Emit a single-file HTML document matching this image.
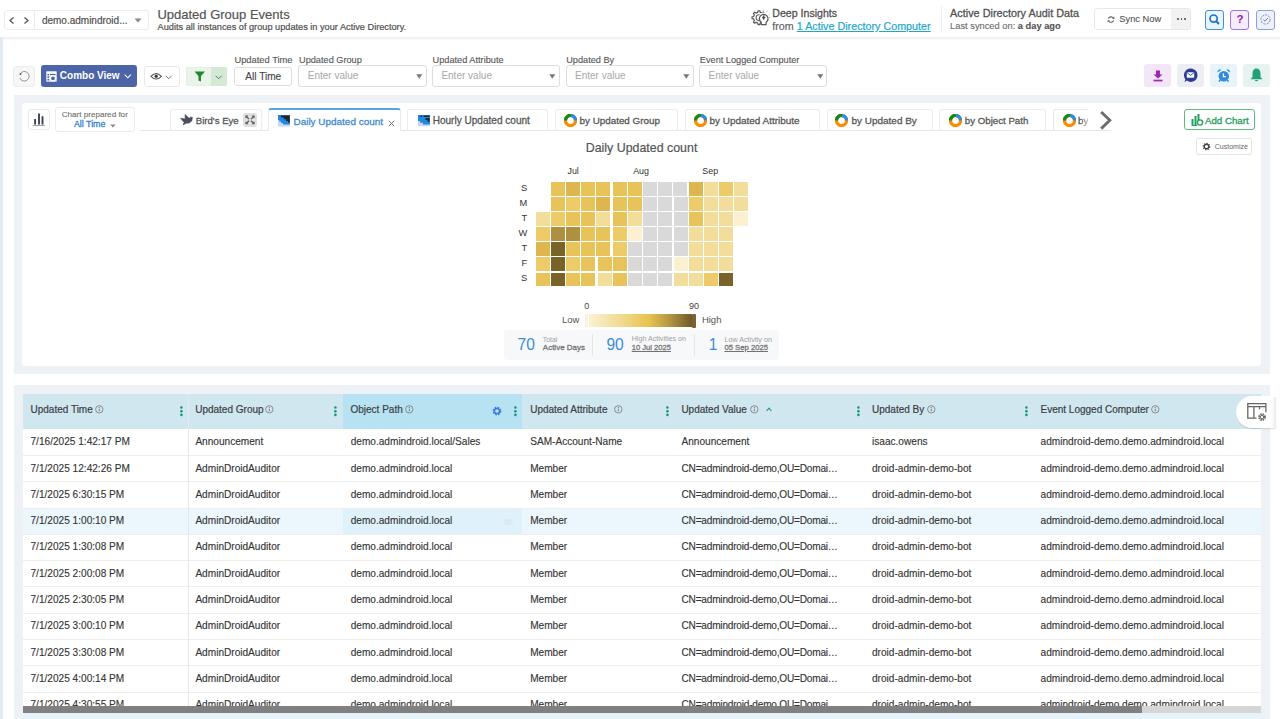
<!DOCTYPE html><html><head><meta charset="utf-8"><style>
html,body{margin:0;padding:0;}
body{width:1280px;height:719px;overflow:hidden;position:relative;background:#fff;font-family:"Liberation Sans",sans-serif;}
.t{position:absolute;line-height:1;white-space:nowrap;}
.r{position:absolute;box-sizing:border-box;}
.sb{-webkit-text-stroke-width:0.27px}
.sm{-webkit-text-stroke-width:0.2px}
.sl{-webkit-text-stroke-width:0.12px}
</style></head><body>
<div class="r" style="left:0.00px;top:36.80px;width:1280.00px;height:3.20px;background:linear-gradient(#EDEDED,#F3F3F3 40%,#FDFDFD)"></div>
<div class="r" style="left:0.00px;top:37.00px;width:3.00px;height:682.00px;background:#E3EAF1"></div>
<div class="r" style="left:3.50px;top:10.25px;width:145.25px;height:19.50px;border:1px solid #EBEBEB;border-radius:3px;background:#fff"></div>
<div class="r" style="left:34.40px;top:10.50px;width:1.00px;height:19.00px;background:#ECECEC"></div>
<svg class="r" style="left:8.00px;top:16.00px;" width="8" height="9" viewBox="0 0 8 9"><path d="M5.5 1.5 L2 4.5 L5.5 7.5" fill="none" stroke="#555" stroke-width="1.3"/></svg>
<svg class="r" style="left:22.00px;top:16.00px;" width="8" height="9" viewBox="0 0 8 9"><path d="M2.5 1.5 L6 4.5 L2.5 7.5" fill="none" stroke="#555" stroke-width="1.3"/></svg>
<div class="t sm" style="left:41.90px;top:15.93px;font-size:10px;color:#505050;font-weight:400;">demo.admindroid...</div>
<svg class="r" style="left:134.00px;top:18.00px;" width="8" height="5" viewBox="0 0 8 5"><path d="M0.5 0.5 L7.5 0.5 L4 4.5 Z" fill="#888"/></svg>
<div class="t sm" style="left:157.40px;top:8.20px;font-size:13px;color:#555;font-weight:400;">Updated Group Events</div>
<div class="t sm" style="left:157.60px;top:23.11px;font-size:9.2px;color:#505050;font-weight:400;">Audits all instances of group updates in your Active Directory.</div>
<svg class="r" style="left:748.00px;top:6.00px;" width="26" height="24" viewBox="0 0 26 24"><path d="M16.37 10.50 L17.94 10.79 L17.94 12.61 L16.37 12.90 L15.64 14.65 L16.55 15.97 L15.27 17.25 L13.95 16.34 L12.20 17.07 L11.91 18.64 L10.09 18.64 L9.80 17.07 L8.05 16.34 L6.73 17.25 L5.45 15.97 L6.36 14.65 L5.63 12.90 L4.06 12.61 L4.06 10.79 L5.63 10.50 L6.36 8.75 L5.45 7.43 L6.73 6.15 L8.05 7.06 L9.80 6.33 L10.09 4.76 L11.91 4.76 L12.20 6.33 L13.95 7.06 L15.27 6.15 L16.55 7.43 L15.64 8.75 Z" fill="#fff" stroke="#555" stroke-width="1.2" stroke-linejoin="round"/>
      <circle cx="11" cy="11.7" r="2.9" fill="none" stroke="#666" stroke-width="1.1"/>
      <circle cx="15.7" cy="11.4" r="4.9" fill="#fff"/>
      <path d="M13.3 16.2 A4.3 4.3 0 1 1 18.1 16.2 V18.6 H13.3 Z" fill="#fff" stroke="#555" stroke-width="1.2" stroke-linejoin="round"/>
      <path d="M16.2 9.2 L14.8 11.6 L16.6 11.4 L15.3 13.6" fill="none" stroke="#444" stroke-width="1.1"/>
      <path d="M15.6 4.2 V5.4 M19.2 5 L18.6 6 M21.6 8 L20.6 8.6 M22.2 11.4 H21 M21.5 14.6 L20.6 14" stroke="#999" stroke-width="0.8"/></svg>
<div class="t sb" style="left:772.30px;top:8.23px;font-size:10.6px;color:#505050;font-weight:400;">Deep Insights</div>
<div class="t sm" style="left:772.30px;top:20.90px;font-size:10.75px;color:#666;font-weight:400;">from <span style="color:#1DA7D0;text-decoration:underline">1 Active Directory Computer</span></div>
<div class="r" style="left:940.50px;top:6.00px;width:1.00px;height:27.00px;background:#F0F0F0"></div>
<div class="t sb" style="left:950.10px;top:8.32px;font-size:10.85px;color:#505050;font-weight:400;">Active Directory Audit Data</div>
<div class="t sl" style="left:950.10px;top:22.23px;font-size:9.3px;color:#6a6a6a;font-weight:400;">Last synced on: <b style="color:#555">a day ago</b></div>
<div class="r" style="left:1094.00px;top:8.00px;width:97.00px;height:21.80px;border:1px solid #E8E8E8;border-radius:3px;background:#fff"></div>
<div class="r" style="left:1171.00px;top:9.00px;width:19.00px;height:19.80px;background:#F2F2F2"></div>
<svg class="r" style="left:1107.00px;top:14.50px;" width="8" height="9" viewBox="0 0 8 9"><path d="M1.3 3.6 A3.1 3.1 0 0 1 6.6 3.2" fill="none" stroke="#666" stroke-width="1.1"/><path d="M6.7 5.6 A3.1 3.1 0 0 1 1.4 6" fill="none" stroke="#666" stroke-width="1.1"/><path d="M7.4 1.6 V3.9 H5.1 Z M0.6 7.6 V5.3 H2.9 Z" fill="#666"/></svg>
<div class="t sl" style="left:1119.30px;top:14.73px;font-size:9.3px;color:#555;font-weight:400;">Sync Now</div>
<div class="r" style="left:1177.30px;top:17.80px;width:1.80px;height:1.80px;background:#444;border-radius:1px"></div>
<div class="r" style="left:1180.60px;top:17.80px;width:1.80px;height:1.80px;background:#444;border-radius:1px"></div>
<div class="r" style="left:1183.90px;top:17.80px;width:1.80px;height:1.80px;background:#444;border-radius:1px"></div>
<div class="r" style="left:1205.00px;top:10.00px;width:18.80px;height:19.60px;border:1px solid #3D93DE;border-radius:3px;background:#EAF4FC"></div>
<svg class="r" style="left:1208.00px;top:13.00px;" width="13" height="13" viewBox="0 0 13 13"><circle cx="5.6" cy="5.6" r="3.6" fill="none" stroke="#1E74C9" stroke-width="1.7"/><path d="M8.2 8.2 L11 11" stroke="#1E74C9" stroke-width="2"/></svg>
<div class="r" style="left:1230.00px;top:10.00px;width:19.40px;height:19.60px;border:1px solid #A872E0;border-radius:3px;background:#F4ECFC"></div>
<div class="t " style="left:1236.50px;top:14.27px;font-size:11.5px;color:#8E24AA;font-weight:700;">?</div>
<div class="r" style="left:1255.50px;top:10.00px;width:19.20px;height:19.60px;border:1px solid #8C9FDA;border-radius:3px;background:#EEF1FA"></div>
<svg class="r" style="left:1258.50px;top:13.00px;" width="13" height="13" viewBox="0 0 13 13"><circle cx="6.5" cy="6.5" r="4.6" fill="none" stroke="#7F8FD0" stroke-width="1" stroke-dasharray="2.4 1"/><path d="M4.3 6.6 L6 8.2 L8.9 5" fill="none" stroke="#6C7CC4" stroke-width="1"/></svg>
<div class="r" style="left:13.25px;top:65.60px;width:21.65px;height:21.80px;border:1px solid #ECECEC;border-radius:3px;background:#F7F7F7"></div>
<svg class="r" style="left:18.00px;top:70.00px;" width="13" height="13" viewBox="0 0 13 13"><path d="M2.1 3.97 A4.8 4.8 0 1 1 1.82 8.02" fill="none" stroke="#888" stroke-width="0.9"/><circle cx="2.5" cy="4.1" r="1" fill="#555"/></svg>
<div class="r" style="left:41.00px;top:64.90px;width:96.20px;height:22.00px;background:#4B65A8;border-radius:3px"></div>
<svg class="r" style="left:45.50px;top:70.50px;" width="11" height="11" viewBox="0 0 11 11"><rect x="0.9" y="0.9" width="9.2" height="9.2" fill="none" stroke="#fff" stroke-width="1.1"/><rect x="0.9" y="0.9" width="9.2" height="2" fill="#fff"/><path d="M0.9 4.8 H4 M0.9 7.4 H4 M3.6 2.8 V10 M4 4.8 H10" stroke="#fff" stroke-width="0.9"/><circle cx="7" cy="7.3" r="2.6" fill="#4B65A8" stroke="#fff" stroke-width="1.4"/></svg>
<div class="t " style="left:59.80px;top:71.13px;font-size:10px;color:#fff;font-weight:700;">Combo View</div>
<svg class="r" style="left:124.00px;top:73.50px;" width="8" height="5" viewBox="0 0 8 5"><path d="M0.7 0.7 L3.8 3.8 L6.9 0.7" fill="none" stroke="#fff" stroke-width="1.1"/></svg>
<div class="r" style="left:143.70px;top:66.30px;width:36.40px;height:20.30px;border:1px solid #E8E8E8;border-radius:3px;background:#fff"></div>
<svg class="r" style="left:150.00px;top:72.00px;" width="13" height="9" viewBox="0 0 13 9"><path d="M1 4.3 Q6.2 -1.2 11.4 4.3 Q6.2 9.8 1 4.3 Z" fill="none" stroke="#555" stroke-width="1.1"/><circle cx="6.2" cy="4.3" r="1.7" fill="#3b4050"/></svg>
<svg class="r" style="left:165.00px;top:74.50px;" width="8" height="5" viewBox="0 0 8 5"><path d="M0.7 0.7 L3.7 3.8 L6.7 0.7" fill="none" stroke="#777" stroke-width="1"/></svg>
<div class="r" style="left:186.20px;top:67.20px;width:24.90px;height:18.90px;background:#EAF4EA;border:1px dotted #DDEBDD;border-right:none"></div>
<div class="r" style="left:211.10px;top:67.20px;width:16.10px;height:18.90px;background:#D4EAD4;border-radius:0 2px 2px 0"></div>
<svg class="r" style="left:193.50px;top:71.00px;" width="12" height="11" viewBox="0 0 12 11"><path d="M0.5 0.5 H11 L7 5 V10.5 L4.5 9.5 V5 Z" fill="#1B8A2B"/></svg>
<svg class="r" style="left:214.80px;top:74.50px;" width="8" height="5" viewBox="0 0 8 5"><path d="M0.7 0.7 L3.7 3.8 L6.7 0.7" fill="none" stroke="#6b7a6b" stroke-width="1"/></svg>
<div class="t sl" style="left:234.40px;top:56.49px;font-size:9.35px;color:#555;font-weight:400;">Updated Time</div>
<div class="r" style="left:234.40px;top:67.20px;width:57.80px;height:19.10px;border:1px solid #DEDEDE;border-radius:3px;background:#fff"></div>
<div class="t sl" style="left:245.30px;top:72.15px;font-size:10.1px;color:#444;font-weight:400;">All Time</div>
<div class="t sl" style="left:299.00px;top:55.71px;font-size:9.2px;color:#555;font-weight:400;">Updated Group</div>
<div class="r" style="left:298.30px;top:65.30px;width:128.30px;height:21.90px;border:1px solid #DDDDDD;border-radius:3px;background:#fff"></div>
<div class="t " style="left:307.80px;top:71.33px;font-size:10.0px;color:#A8A8A8;font-weight:400;">Enter value</div>
<svg class="r" style="left:415.80px;top:74.00px;" width="7" height="5" viewBox="0 0 7 5"><path d="M0.3 0.3 H6.3 L3.3 4.8 Z" fill="#777"/></svg>
<div class="t sl" style="left:432.60px;top:55.71px;font-size:9.2px;color:#555;font-weight:400;">Updated Attribute</div>
<div class="r" style="left:431.90px;top:65.30px;width:128.30px;height:21.90px;border:1px solid #DDDDDD;border-radius:3px;background:#fff"></div>
<div class="t " style="left:441.40px;top:71.33px;font-size:10.0px;color:#A8A8A8;font-weight:400;">Enter value</div>
<svg class="r" style="left:549.40px;top:74.00px;" width="7" height="5" viewBox="0 0 7 5"><path d="M0.3 0.3 H6.3 L3.3 4.8 Z" fill="#777"/></svg>
<div class="t sl" style="left:566.20px;top:55.71px;font-size:9.2px;color:#555;font-weight:400;">Updated By</div>
<div class="r" style="left:565.50px;top:65.30px;width:128.30px;height:21.90px;border:1px solid #DDDDDD;border-radius:3px;background:#fff"></div>
<div class="t " style="left:575.00px;top:71.33px;font-size:10.0px;color:#A8A8A8;font-weight:400;">Enter value</div>
<svg class="r" style="left:683.00px;top:74.00px;" width="7" height="5" viewBox="0 0 7 5"><path d="M0.3 0.3 H6.3 L3.3 4.8 Z" fill="#777"/></svg>
<div class="t sl" style="left:699.80px;top:55.71px;font-size:9.2px;color:#555;font-weight:400;">Event Logged Computer</div>
<div class="r" style="left:699.10px;top:65.30px;width:128.30px;height:21.90px;border:1px solid #DDDDDD;border-radius:3px;background:#fff"></div>
<div class="t " style="left:708.60px;top:71.33px;font-size:10.0px;color:#A8A8A8;font-weight:400;">Enter value</div>
<svg class="r" style="left:816.60px;top:74.00px;" width="7" height="5" viewBox="0 0 7 5"><path d="M0.3 0.3 H6.3 L3.3 4.8 Z" fill="#777"/></svg>
<div class="r" style="left:1144.20px;top:64.20px;width:26.60px;height:22.40px;background:#F4E6F9;border-radius:3px"></div>
<svg class="r" style="left:1152.50px;top:69.50px;" width="10" height="12" viewBox="0 0 10 12"><path d="M3 0.5 H7 V4.5 H9.5 L5 8.5 L0.5 4.5 H3 Z" fill="#9C27B0"/><rect x="0.5" y="9.7" width="9" height="1.7" fill="#9C27B0"/></svg>
<div class="r" style="left:1176.90px;top:64.20px;width:26.90px;height:22.40px;background:#ECEEF4;border-radius:3px"></div>
<svg class="r" style="left:1183.00px;top:67.50px;" width="15" height="15" viewBox="0 0 15 15"><path d="M7.5 0.5 A6.7 6.7 0 1 1 3.8 12.6 L1.6 14.3 L2.3 11.2 A6.7 6.7 0 0 1 7.5 0.5 Z" fill="#2B3C94"/><rect x="3.8" y="4.3" width="7.4" height="5.4" fill="#fff" rx="0.6"/><path d="M4 4.6 L7.5 7.4 L11 4.6" fill="none" stroke="#2B3C94" stroke-width="0.9"/></svg>
<div class="r" style="left:1210.10px;top:64.20px;width:26.70px;height:22.40px;background:#E8F3FA;border-radius:3px"></div>
<svg class="r" style="left:1216.50px;top:68.50px;" width="14" height="13" viewBox="0 0 14 13"><path d="M0.6 3.6 A2.6 2.6 0 0 1 4.4 0.7 Z M13 3.6 A2.6 2.6 0 0 0 9.2 0.7 Z" fill="#2E8BE0"/><circle cx="6.8" cy="7.2" r="5.2" fill="#2E8BE0"/><path d="M3.3 11 L2.1 12.7 M10.3 11 L11.5 12.7" stroke="#2E8BE0" stroke-width="1.5"/><path d="M6.4 4.4 V7.7 H8.9" fill="none" stroke="#fff" stroke-width="1.3"/></svg>
<div class="r" style="left:1243.20px;top:64.20px;width:26.80px;height:22.40px;background:#E6F3F1;border-radius:3px"></div>
<svg class="r" style="left:1250.00px;top:68.30px;" width="13" height="14" viewBox="0 0 13 14"><path d="M6.5 0.5 C9.5 0.5 10.5 3 10.5 6 V9 L12.5 11.2 H0.5 L2.5 9 V6 C2.5 3 3.5 0.5 6.5 0.5 Z" fill="#23A07B"/><path d="M4.8 12 A1.8 1.8 0 0 0 8.2 12 Z" fill="#23A07B"/></svg>
<div class="r" style="left:13.90px;top:94.70px;width:1255.90px;height:279.00px;background:#EEF2F6"></div>
<div class="r" style="left:22.00px;top:103.00px;width:1239.00px;height:262.70px;background:#fff;border-radius:4px"></div>
<div class="r" style="left:28.10px;top:109.00px;width:22.30px;height:21.40px;border:1px solid #E9E9E9;border-radius:3px;background:#fff"></div>
<svg class="r" style="left:32.00px;top:112.00px;" width="14" height="15" viewBox="0 0 14 15"><path d="M3.1 7 V12.4 M7 1.5 V12.4 M10.5 4.2 V12.4" stroke="#3b4156" stroke-width="1.9"/><path d="M1 13.4 H12.8" stroke="#8a8a8a" stroke-width="0.9"/></svg>
<div class="r" style="left:55.00px;top:106.70px;width:79.80px;height:25.40px;border:1px solid #EBEBEB;border-radius:3px;background:#fff"></div>
<div class="t sl" style="left:61.70px;top:110.64px;font-size:8.1px;color:#707070;font-weight:400;">Chart prepared for</div>
<div class="t sb" style="left:73.90px;top:119.87px;font-size:8.9px;color:#2F80D0;font-weight:400;">All Time</div>
<svg class="r" style="left:110.00px;top:123.50px;" width="6" height="4" viewBox="0 0 6 4"><path d="M0.2 0.4 H5.6 L2.9 3.4 Z" fill="#888"/></svg>
<div class="r" style="left:140.00px;top:130.30px;width:971.00px;height:1.00px;background:#E8E8E8"></div>
<div class="r" style="left:170.40px;top:108.50px;width:91.50px;height:22.30px;background:#fff;border:1px solid #EDEDED;border-bottom:1px solid #E6E6E6;border-radius:3px 3px 0 0"></div>
<svg class="r" style="left:174.00px;top:110.00px;" width="24" height="20" viewBox="0 0 24 20"><path d="M6.7 8.2 L11.2 8.9 L11 4.5 L15.2 8.2 L16.8 7.0 L18.4 7.4 L17.9 10.8 L15.3 12.9 L12.2 13.2 L9 14.9 L10.2 12.3 L8.3 10.5 Z" fill="#4a4d5a" stroke="#4a4d5a" stroke-width="0.6" stroke-linejoin="round"/></svg>
<div class="t sb" style="left:195.80px;top:116.07px;font-size:9.6px;color:#555;font-weight:400;">Bird's Eye</div>
<div class="r" style="left:243.00px;top:113.00px;width:14.00px;height:13.60px;background:#E0E0E0;border-radius:2.5px"></div>
<svg class="r" style="left:243.00px;top:113.00px;" width="14" height="14" viewBox="0 0 14 14"><path d="M3.6 3.8 L6 6.1 M10.4 3.8 L8 6.1 M3.6 10 L6 7.7 M10.4 10 L8 7.7" stroke="#5a5a5a" stroke-width="1.3"/><path d="M2.4 2.6 H5.4 L2.4 5.6 Z M11.6 2.6 H8.6 L11.6 5.6 Z M2.4 11.2 H5.4 L2.4 8.2 Z M11.6 11.2 H8.6 L11.6 8.2 Z" fill="#555"/></svg>
<div class="r" style="left:268.20px;top:108.20px;width:132.40px;height:23.10px;background:#fff;border:1px solid #EAEAEA;border-top:2px solid #5AA3E3;border-bottom:none;border-radius:3px 3px 0 0"></div>
<svg class="r" style="left:278.00px;top:115.10px;" width="12" height="12" viewBox="0 0 12 12"><rect width="12" height="11.6" fill="#CDD6EE"/><path d="M0 0 H12 V9.6 H5 V8 H3 V6.5 H1.2 V5 H0 Z" fill="#1E88E5"/><path d="M3 0.4 H11.8 V7.5 H10 V6 H8 V4.3 H5.8 V2.6 H3 Z" fill="#262626"/></svg>
<div class="t sb" style="left:293.50px;top:116.88px;font-size:9.95px;color:#3D89CF;font-weight:400;">Daily Updated count</div>
<svg class="r" style="left:387.80px;top:119.60px;" width="7" height="7" viewBox="0 0 7 7"><path d="M0.8 0.8 L6.2 6.2 M6.2 0.8 L0.8 6.2" stroke="#777" stroke-width="1"/></svg>
<div class="r" style="left:407.20px;top:108.50px;width:140.60px;height:22.30px;background:#fff;border:1px solid #EDEDED;border-bottom:1px solid #E6E6E6;border-radius:3px 3px 0 0"></div>
<svg class="r" style="left:417.70px;top:115.00px;" width="12" height="12" viewBox="0 0 12 12"><rect width="12" height="11.2" fill="#CDD6EE"/><path d="M0 0 H12 V9.6 H5 V7.8 H2 V6 H0 Z" fill="#1E88E5"/><path d="M2.5 0.5 H4 V2 H2.5 Z M5.5 0.5 H11.6 V2 H5.5 Z M7.5 3 H11.6 V6.8 H9.5 V5 H7.5 Z" fill="#262626"/></svg>
<div class="t sb" style="left:432.70px;top:115.69px;font-size:10.05px;color:#555;font-weight:400;">Hourly Updated count</div>
<div class="r" style="left:554.50px;top:108.50px;width:123.00px;height:22.30px;background:#fff;border:1px solid #EDEDED;border-bottom:1px solid #E6E6E6;border-radius:3px 3px 0 0"></div>
<svg class="r" style="left:563.75px;top:113.75px;" width="13" height="13" viewBox="0 0 13 13"><circle cx="6.5" cy="6.5" r="5.05" fill="none" stroke="#FF8C00" stroke-width="3.3"/>
<path d="M1.45 6.5 A5.05 5.05 0 0 1 7.3 1.5" fill="none" stroke="#168A22" stroke-width="3.3"/>
<path d="M7.3 1.5 A5.05 5.05 0 0 1 11.55 6.5" fill="none" stroke="#2A8DE4" stroke-width="3.3"/></svg>
<div class="t sb" style="left:579.50px;top:115.96px;font-size:9.85px;color:#555;font-weight:400;">by Updated Group</div>
<div class="r" style="left:684.50px;top:108.50px;width:135.00px;height:22.30px;background:#fff;border:1px solid #EDEDED;border-bottom:1px solid #E6E6E6;border-radius:3px 3px 0 0"></div>
<svg class="r" style="left:693.75px;top:113.75px;" width="13" height="13" viewBox="0 0 13 13"><circle cx="6.5" cy="6.5" r="5.05" fill="none" stroke="#FF8C00" stroke-width="3.3"/>
<path d="M1.45 6.5 A5.05 5.05 0 0 1 7.3 1.5" fill="none" stroke="#168A22" stroke-width="3.3"/>
<path d="M7.3 1.5 A5.05 5.05 0 0 1 11.55 6.5" fill="none" stroke="#2A8DE4" stroke-width="3.3"/></svg>
<div class="t sb" style="left:709.50px;top:115.88px;font-size:9.95px;color:#555;font-weight:400;">by Updated Attribute</div>
<div class="r" style="left:826.50px;top:108.50px;width:106.70px;height:22.30px;background:#fff;border:1px solid #EDEDED;border-bottom:1px solid #E6E6E6;border-radius:3px 3px 0 0"></div>
<svg class="r" style="left:835.10px;top:113.75px;" width="13" height="13" viewBox="0 0 13 13"><circle cx="6.5" cy="6.5" r="5.05" fill="none" stroke="#FF8C00" stroke-width="3.3"/>
<path d="M1.45 6.5 A5.05 5.05 0 0 1 7.3 1.5" fill="none" stroke="#168A22" stroke-width="3.3"/>
<path d="M7.3 1.5 A5.05 5.05 0 0 1 11.55 6.5" fill="none" stroke="#2A8DE4" stroke-width="3.3"/></svg>
<div class="t sb" style="left:851.60px;top:115.88px;font-size:9.95px;color:#555;font-weight:400;">by Updated By</div>
<div class="r" style="left:939.30px;top:108.50px;width:107.10px;height:22.30px;background:#fff;border:1px solid #EDEDED;border-bottom:1px solid #E6E6E6;border-radius:3px 3px 0 0"></div>
<svg class="r" style="left:948.60px;top:113.75px;" width="13" height="13" viewBox="0 0 13 13"><circle cx="6.5" cy="6.5" r="5.05" fill="none" stroke="#FF8C00" stroke-width="3.3"/>
<path d="M1.45 6.5 A5.05 5.05 0 0 1 7.3 1.5" fill="none" stroke="#168A22" stroke-width="3.3"/>
<path d="M7.3 1.5 A5.05 5.05 0 0 1 11.55 6.5" fill="none" stroke="#2A8DE4" stroke-width="3.3"/></svg>
<div class="t sb" style="left:964.80px;top:116.09px;font-size:9.7px;color:#555;font-weight:400;">by Object Path</div>
<div class="r" style="left:1052.8px;top:108.5px;width:35px;height:22px;overflow:hidden"><div class="r" style="left:0;top:0;width:60px;height:22px;border:1px solid #EAEAEA;border-bottom:1px solid #E6E6E6;border-radius:3px 3px 0 0;background:#fff"></div><svg class="r" style="left:9.9px;top:5.25px" width="13" height="13" viewBox="0 0 13 13"><circle cx="6.5" cy="6.5" r="5.05" fill="none" stroke="#FF8C00" stroke-width="3.3"/>
<path d="M1.45 6.5 A5.05 5.05 0 0 1 7.3 1.5" fill="none" stroke="#168A22" stroke-width="3.3"/>
<path d="M7.3 1.5 A5.05 5.05 0 0 1 11.55 6.5" fill="none" stroke="#2A8DE4" stroke-width="3.3"/></svg><div class="t" style="left:25.3px;top:7.4px;font-size:9.95px;color:#555;-webkit-text-stroke-width:0.27px;-webkit-mask-image:linear-gradient(90deg,#000 2px,rgba(0,0,0,0.45) 9px,transparent 13px)">by Upd</div></div>
<svg class="r" style="left:1097.50px;top:110.00px;" width="16" height="21" viewBox="0 0 16 21"><path d="M3.2 2 L11.8 10.3 L3.2 18.6" fill="none" stroke="#6e6e6e" stroke-width="2.9"/></svg>
<div class="r" style="left:1184.20px;top:109.20px;width:71.10px;height:20.50px;border:1px solid #5DBB7D;border-radius:3px;background:#fff"></div>
<svg class="r" style="left:1190.50px;top:113.00px;" width="13" height="13" viewBox="0 0 13 13"><path d="M1.5 6 V12 M4.5 3 V12 M7.5 1 V7" stroke="#23A05F" stroke-width="2"/><circle cx="9" cy="9.5" r="2.6" fill="#fff" stroke="#23A05F" stroke-width="1.4"/><path d="M0.5 12.5 H6" stroke="#23A05F" stroke-width="1"/></svg>
<div class="t sb" style="left:1205.00px;top:115.79px;font-size:9.7px;color:#1E9A5C;font-weight:400;">Add Chart</div>
<div class="r" style="left:1195.80px;top:138.00px;width:56.70px;height:16.70px;border:1px solid #E4E4E4;border-radius:2px;background:#fff"></div>
<svg class="r" style="left:1202.20px;top:142.20px;" width="9" height="9" viewBox="0 0 9 9"><circle cx="4.5" cy="4.5" r="2.9" fill="none" stroke="#444" stroke-width="1.9" stroke-dasharray="1.3 0.9"/><circle cx="4.5" cy="4.5" r="2.2" fill="none" stroke="#444" stroke-width="1.2"/></svg>
<div class="t " style="left:1214.70px;top:142.73px;font-size:7.05px;color:#666;font-weight:400;">Customize</div>
<div class="t sm" style="left:585.75px;top:142.40px;font-size:12.4px;color:#555;font-weight:400;">Daily Updated count</div>
<div class="t " style="left:567.50px;top:166.97px;font-size:8.9px;color:#333;font-weight:400;">Jul</div>
<div class="t " style="left:633.20px;top:166.97px;font-size:8.9px;color:#333;font-weight:400;">Aug</div>
<div class="t " style="left:702.30px;top:166.97px;font-size:8.9px;color:#333;font-weight:400;">Sep</div>
<div class="t" style="left:500px;width:27.2px;text-align:right;top:184.17px;font-size:9.3px;color:#333">S</div>
<div class="t" style="left:500px;width:27.2px;text-align:right;top:199.22px;font-size:9.3px;color:#333">M</div>
<div class="t" style="left:500px;width:27.2px;text-align:right;top:214.27px;font-size:9.3px;color:#333">T</div>
<div class="t" style="left:500px;width:27.2px;text-align:right;top:229.32px;font-size:9.3px;color:#333">W</div>
<div class="t" style="left:500px;width:27.2px;text-align:right;top:244.37px;font-size:9.3px;color:#333">T</div>
<div class="t" style="left:500px;width:27.2px;text-align:right;top:259.43px;font-size:9.3px;color:#333">F</div>
<div class="t" style="left:500px;width:27.2px;text-align:right;top:274.48px;font-size:9.3px;color:#333">S</div>
<div class="r" style="left:536.20px;top:212.30px;width:13.75px;height:13.75px;background:#F2DD9A"></div>
<div class="r" style="left:536.20px;top:227.35px;width:13.75px;height:13.75px;background:#ECCB68"></div>
<div class="r" style="left:536.20px;top:242.40px;width:13.75px;height:13.75px;background:#DDB650"></div>
<div class="r" style="left:536.20px;top:257.45px;width:13.75px;height:13.75px;background:#ECCB68"></div>
<div class="r" style="left:536.20px;top:272.50px;width:13.75px;height:13.75px;background:#E8C35A"></div>
<div class="r" style="left:551.25px;top:182.20px;width:13.75px;height:13.75px;background:#E8C35A"></div>
<div class="r" style="left:551.25px;top:197.25px;width:13.75px;height:13.75px;background:#E8C35A"></div>
<div class="r" style="left:551.25px;top:212.30px;width:13.75px;height:13.75px;background:#ECCB68"></div>
<div class="r" style="left:551.25px;top:227.35px;width:13.75px;height:13.75px;background:#AE9140"></div>
<div class="r" style="left:551.25px;top:242.40px;width:13.75px;height:13.75px;background:#7A6328"></div>
<div class="r" style="left:551.25px;top:257.45px;width:13.75px;height:13.75px;background:#7A6328"></div>
<div class="r" style="left:551.25px;top:272.50px;width:13.75px;height:13.75px;background:#7A6328"></div>
<div class="r" style="left:566.30px;top:182.20px;width:13.75px;height:13.75px;background:#DDB650"></div>
<div class="r" style="left:566.30px;top:197.25px;width:13.75px;height:13.75px;background:#ECCB68"></div>
<div class="r" style="left:566.30px;top:212.30px;width:13.75px;height:13.75px;background:#E8C35A"></div>
<div class="r" style="left:566.30px;top:227.35px;width:13.75px;height:13.75px;background:#AE9140"></div>
<div class="r" style="left:566.30px;top:242.40px;width:13.75px;height:13.75px;background:#E8C35A"></div>
<div class="r" style="left:566.30px;top:257.45px;width:13.75px;height:13.75px;background:#ECCB68"></div>
<div class="r" style="left:566.30px;top:272.50px;width:13.75px;height:13.75px;background:#E8C35A"></div>
<div class="r" style="left:581.35px;top:182.20px;width:13.75px;height:13.75px;background:#E8C35A"></div>
<div class="r" style="left:581.35px;top:197.25px;width:13.75px;height:13.75px;background:#E8C35A"></div>
<div class="r" style="left:581.35px;top:212.30px;width:13.75px;height:13.75px;background:#E8C35A"></div>
<div class="r" style="left:581.35px;top:227.35px;width:13.75px;height:13.75px;background:#E8C35A"></div>
<div class="r" style="left:581.35px;top:242.40px;width:13.75px;height:13.75px;background:#E8C35A"></div>
<div class="r" style="left:581.35px;top:257.45px;width:13.75px;height:13.75px;background:#E8C35A"></div>
<div class="r" style="left:581.35px;top:272.50px;width:13.75px;height:13.75px;background:#E8C35A"></div>
<div class="r" style="left:596.40px;top:182.20px;width:13.75px;height:13.75px;background:#E8C35A"></div>
<div class="r" style="left:596.40px;top:197.25px;width:13.75px;height:13.75px;background:#DDB650"></div>
<div class="r" style="left:596.40px;top:212.30px;width:13.75px;height:13.75px;background:#F2DD9A"></div>
<div class="r" style="left:596.40px;top:227.35px;width:13.75px;height:13.75px;background:#E8C35A"></div>
<div class="r" style="left:596.40px;top:242.40px;width:13.75px;height:13.75px;background:#E8C35A"></div>
<div class="r" style="left:597.90px;top:257.45px;width:13.75px;height:13.75px;background:#E8C35A"></div>
<div class="r" style="left:597.90px;top:272.50px;width:13.75px;height:13.75px;background:#F2DD9A"></div>
<div class="r" style="left:612.95px;top:182.20px;width:13.75px;height:13.75px;background:#E8C35A"></div>
<div class="r" style="left:612.95px;top:197.25px;width:13.75px;height:13.75px;background:#E8C35A"></div>
<div class="r" style="left:612.95px;top:212.30px;width:13.75px;height:13.75px;background:#E8C35A"></div>
<div class="r" style="left:612.95px;top:227.35px;width:13.75px;height:13.75px;background:#ECCB68"></div>
<div class="r" style="left:612.95px;top:242.40px;width:13.75px;height:13.75px;background:#ECCB68"></div>
<div class="r" style="left:612.95px;top:257.45px;width:13.75px;height:13.75px;background:#E8C35A"></div>
<div class="r" style="left:612.95px;top:272.50px;width:13.75px;height:13.75px;background:#E8C35A"></div>
<div class="r" style="left:628.00px;top:182.20px;width:13.75px;height:13.75px;background:#E8C35A"></div>
<div class="r" style="left:628.00px;top:197.25px;width:13.75px;height:13.75px;background:#E8C35A"></div>
<div class="r" style="left:628.00px;top:212.30px;width:13.75px;height:13.75px;background:#F2DD9A"></div>
<div class="r" style="left:628.00px;top:227.35px;width:13.75px;height:13.75px;background:#FBF0D0"></div>
<div class="r" style="left:628.00px;top:242.40px;width:13.75px;height:13.75px;background:#D9D9D9"></div>
<div class="r" style="left:628.00px;top:257.45px;width:13.75px;height:13.75px;background:#D9D9D9"></div>
<div class="r" style="left:628.00px;top:272.50px;width:13.75px;height:13.75px;background:#D9D9D9"></div>
<div class="r" style="left:643.05px;top:182.20px;width:13.75px;height:13.75px;background:#D9D9D9"></div>
<div class="r" style="left:643.05px;top:197.25px;width:13.75px;height:13.75px;background:#D9D9D9"></div>
<div class="r" style="left:643.05px;top:212.30px;width:13.75px;height:13.75px;background:#D9D9D9"></div>
<div class="r" style="left:643.05px;top:227.35px;width:13.75px;height:13.75px;background:#D9D9D9"></div>
<div class="r" style="left:643.05px;top:242.40px;width:13.75px;height:13.75px;background:#D9D9D9"></div>
<div class="r" style="left:643.05px;top:257.45px;width:13.75px;height:13.75px;background:#D9D9D9"></div>
<div class="r" style="left:643.05px;top:272.50px;width:13.75px;height:13.75px;background:#D9D9D9"></div>
<div class="r" style="left:658.10px;top:182.20px;width:13.75px;height:13.75px;background:#D9D9D9"></div>
<div class="r" style="left:658.10px;top:197.25px;width:13.75px;height:13.75px;background:#D9D9D9"></div>
<div class="r" style="left:658.10px;top:212.30px;width:13.75px;height:13.75px;background:#D9D9D9"></div>
<div class="r" style="left:658.10px;top:227.35px;width:13.75px;height:13.75px;background:#D9D9D9"></div>
<div class="r" style="left:658.10px;top:242.40px;width:13.75px;height:13.75px;background:#D9D9D9"></div>
<div class="r" style="left:658.10px;top:257.45px;width:13.75px;height:13.75px;background:#D9D9D9"></div>
<div class="r" style="left:658.10px;top:272.50px;width:13.75px;height:13.75px;background:#D9D9D9"></div>
<div class="r" style="left:673.15px;top:182.20px;width:13.75px;height:13.75px;background:#D9D9D9"></div>
<div class="r" style="left:674.15px;top:197.25px;width:13.75px;height:13.75px;background:#D9D9D9"></div>
<div class="r" style="left:674.15px;top:212.30px;width:13.75px;height:13.75px;background:#D9D9D9"></div>
<div class="r" style="left:674.15px;top:227.35px;width:13.75px;height:13.75px;background:#D9D9D9"></div>
<div class="r" style="left:674.15px;top:242.40px;width:13.75px;height:13.75px;background:#D9D9D9"></div>
<div class="r" style="left:674.15px;top:257.45px;width:13.75px;height:13.75px;background:#FBF0D0"></div>
<div class="r" style="left:674.15px;top:272.50px;width:13.75px;height:13.75px;background:#F2DD9A"></div>
<div class="r" style="left:689.20px;top:182.20px;width:13.75px;height:13.75px;background:#DDB650"></div>
<div class="r" style="left:689.20px;top:197.25px;width:13.75px;height:13.75px;background:#ECCB68"></div>
<div class="r" style="left:689.20px;top:212.30px;width:13.75px;height:13.75px;background:#E8C35A"></div>
<div class="r" style="left:689.20px;top:227.35px;width:13.75px;height:13.75px;background:#F2DD9A"></div>
<div class="r" style="left:689.20px;top:242.40px;width:13.75px;height:13.75px;background:#F2DD9A"></div>
<div class="r" style="left:689.20px;top:257.45px;width:13.75px;height:13.75px;background:#F2DD9A"></div>
<div class="r" style="left:689.20px;top:272.50px;width:13.75px;height:13.75px;background:#F2DD9A"></div>
<div class="r" style="left:704.25px;top:182.20px;width:13.75px;height:13.75px;background:#F2DD9A"></div>
<div class="r" style="left:704.25px;top:197.25px;width:13.75px;height:13.75px;background:#F2DD9A"></div>
<div class="r" style="left:704.25px;top:212.30px;width:13.75px;height:13.75px;background:#F2DD9A"></div>
<div class="r" style="left:704.25px;top:227.35px;width:13.75px;height:13.75px;background:#F2DD9A"></div>
<div class="r" style="left:704.25px;top:242.40px;width:13.75px;height:13.75px;background:#F2DD9A"></div>
<div class="r" style="left:704.25px;top:257.45px;width:13.75px;height:13.75px;background:#F2DD9A"></div>
<div class="r" style="left:704.25px;top:272.50px;width:13.75px;height:13.75px;background:#ECCB68"></div>
<div class="r" style="left:719.30px;top:182.20px;width:13.75px;height:13.75px;background:#ECCB68"></div>
<div class="r" style="left:719.30px;top:197.25px;width:13.75px;height:13.75px;background:#F2DD9A"></div>
<div class="r" style="left:719.30px;top:212.30px;width:13.75px;height:13.75px;background:#F2DD9A"></div>
<div class="r" style="left:719.30px;top:227.35px;width:13.75px;height:13.75px;background:#F2DD9A"></div>
<div class="r" style="left:719.30px;top:242.40px;width:13.75px;height:13.75px;background:#F2DD9A"></div>
<div class="r" style="left:719.30px;top:257.45px;width:13.75px;height:13.75px;background:#F2DD9A"></div>
<div class="r" style="left:719.30px;top:272.50px;width:13.75px;height:13.75px;background:#7A6328"></div>
<div class="r" style="left:734.35px;top:182.20px;width:13.75px;height:13.75px;background:#F2DD9A"></div>
<div class="r" style="left:734.35px;top:197.25px;width:13.75px;height:13.75px;background:#F2DD9A"></div>
<div class="r" style="left:734.35px;top:212.30px;width:13.75px;height:13.75px;background:#FBF0D0"></div>
<div class="t " style="left:584.20px;top:302.18px;font-size:9px;color:#444;font-weight:400;">0</div>
<div class="t " style="left:689.00px;top:302.18px;font-size:9px;color:#444;font-weight:400;">90</div>
<div class="t " style="left:562.00px;top:314.86px;font-size:9.5px;color:#555;font-weight:400;">Low</div>
<div class="t " style="left:701.90px;top:314.86px;font-size:9.5px;color:#555;font-weight:400;">High</div>
<div class="r" style="left:585.20px;top:314.00px;width:2.80px;height:13.00px;background:#FBF3DC"></div>
<div class="r" style="left:589.00px;top:314.00px;width:103.30px;height:13.00px;background:linear-gradient(90deg,#FBF1D6 0%,#F1DB93 30%,#E9C34F 58%,#B39642 78%,#6E5A27 100%)"></div>
<div class="r" style="left:692.30px;top:313.50px;width:3.30px;height:14.00px;background:#7C6232;border-radius:1px"></div>
<div class="r" style="left:504.00px;top:330.00px;width:275.40px;height:29.75px;background:#F7F8FA;border-radius:4px"></div>
<div class="r" style="left:592.00px;top:334.00px;width:1.00px;height:22.00px;background:#E6E6E6"></div>
<div class="r" style="left:693.80px;top:334.00px;width:1.00px;height:22.00px;background:#E6E6E6"></div>
<div class="t " style="left:517.60px;top:336.69px;font-size:15.6px;color:#3C8DD6;font-weight:400;">70</div>
<div class="t " style="left:542.80px;top:336.56px;font-size:6.9px;color:#A0A0A0;font-weight:400;">Total</div>
<div class="t sb" style="left:542.80px;top:343.83px;font-size:8.0px;color:#727272;font-weight:400;">Active Days</div>
<div class="t " style="left:606.40px;top:336.69px;font-size:15.6px;color:#3C8DD6;font-weight:400;">90</div>
<div class="t " style="left:631.70px;top:336.35px;font-size:7.15px;color:#A0A0A0;font-weight:400;">High Activities on</div>
<div class="t sb" style="left:631.70px;top:344.17px;font-size:7.6px;color:#727272;font-weight:400;text-decoration:underline">10 Jul 2025</div>
<div class="t " style="left:708.80px;top:336.69px;font-size:15.6px;color:#3C8DD6;font-weight:400;">1</div>
<div class="t " style="left:724.40px;top:336.31px;font-size:7.2px;color:#A0A0A0;font-weight:400;">Low Activity on</div>
<div class="t sb" style="left:724.40px;top:344.08px;font-size:7.7px;color:#727272;font-weight:400;text-decoration:underline">05 Sep 2025</div>
<div class="r" style="left:13.90px;top:385.20px;width:1255.90px;height:333.80px;background:#EEF2F6"></div>
<div class="r" style="left:23.10px;top:393.90px;width:1237.90px;height:319.10px;background:#fff"></div>
<div class="r" style="left:23.10px;top:393.90px;width:1237.90px;height:35.20px;background:#D0E7EF"></div>
<div class="r" style="left:342.80px;top:393.90px;width:179.40px;height:35.20px;background:#B7E2F2"></div>
<div class="t sm" style="left:30.50px;top:405.24px;font-size:10.0px;color:#3a3f45;font-weight:400;">Updated Time</div>
<svg class="r" style="left:95.20px;top:404.60px;" width="9" height="9" viewBox="0 0 9 9"><circle cx="4.3" cy="4.3" r="3.7" fill="none" stroke="#777" stroke-width="0.8"/><path d="M4.3 3.6 V6.3" stroke="#777" stroke-width="0.9"/><circle cx="4.3" cy="2.4" r="0.55" fill="#777"/></svg>
<svg class="r" style="left:179.60px;top:405.50px;" width="3" height="11" viewBox="0 0 3 11"><circle cx="1.4" cy="1.5" r="1.3" fill="#16937C"/><circle cx="1.4" cy="5.2" r="1.3" fill="#16937C"/><circle cx="1.4" cy="8.9" r="1.3" fill="#16937C"/></svg>
<div class="t sm" style="left:195.20px;top:405.24px;font-size:10.0px;color:#3a3f45;font-weight:400;">Updated Group</div>
<svg class="r" style="left:264.80px;top:404.60px;" width="9" height="9" viewBox="0 0 9 9"><circle cx="4.3" cy="4.3" r="3.7" fill="none" stroke="#777" stroke-width="0.8"/><path d="M4.3 3.6 V6.3" stroke="#777" stroke-width="0.9"/><circle cx="4.3" cy="2.4" r="0.55" fill="#777"/></svg>
<svg class="r" style="left:334.00px;top:405.50px;" width="3" height="11" viewBox="0 0 3 11"><circle cx="1.4" cy="1.5" r="1.3" fill="#16937C"/><circle cx="1.4" cy="5.2" r="1.3" fill="#16937C"/><circle cx="1.4" cy="8.9" r="1.3" fill="#16937C"/></svg>
<div class="t sm" style="left:350.50px;top:405.24px;font-size:10.0px;color:#3a3f45;font-weight:400;">Object Path</div>
<svg class="r" style="left:404.80px;top:404.60px;" width="9" height="9" viewBox="0 0 9 9"><circle cx="4.3" cy="4.3" r="3.7" fill="none" stroke="#777" stroke-width="0.8"/><path d="M4.3 3.6 V6.3" stroke="#777" stroke-width="0.9"/><circle cx="4.3" cy="2.4" r="0.55" fill="#777"/></svg>
<svg class="r" style="left:514.40px;top:405.50px;" width="3" height="11" viewBox="0 0 3 11"><circle cx="1.4" cy="1.5" r="1.3" fill="#16937C"/><circle cx="1.4" cy="5.2" r="1.3" fill="#16937C"/><circle cx="1.4" cy="8.9" r="1.3" fill="#16937C"/></svg>
<div class="t sm" style="left:530.20px;top:405.24px;font-size:10.0px;color:#3a3f45;font-weight:400;">Updated Attribute</div>
<svg class="r" style="left:613.50px;top:404.60px;" width="9" height="9" viewBox="0 0 9 9"><circle cx="4.3" cy="4.3" r="3.7" fill="none" stroke="#777" stroke-width="0.8"/><path d="M4.3 3.6 V6.3" stroke="#777" stroke-width="0.9"/><circle cx="4.3" cy="2.4" r="0.55" fill="#777"/></svg>
<svg class="r" style="left:666.20px;top:405.50px;" width="3" height="11" viewBox="0 0 3 11"><circle cx="1.4" cy="1.5" r="1.3" fill="#16937C"/><circle cx="1.4" cy="5.2" r="1.3" fill="#16937C"/><circle cx="1.4" cy="8.9" r="1.3" fill="#16937C"/></svg>
<div class="t sm" style="left:681.40px;top:405.24px;font-size:10.0px;color:#3a3f45;font-weight:400;">Updated Value</div>
<svg class="r" style="left:749.60px;top:404.60px;" width="9" height="9" viewBox="0 0 9 9"><circle cx="4.3" cy="4.3" r="3.7" fill="none" stroke="#777" stroke-width="0.8"/><path d="M4.3 3.6 V6.3" stroke="#777" stroke-width="0.9"/><circle cx="4.3" cy="2.4" r="0.55" fill="#777"/></svg>
<svg class="r" style="left:856.80px;top:405.50px;" width="3" height="11" viewBox="0 0 3 11"><circle cx="1.4" cy="1.5" r="1.3" fill="#16937C"/><circle cx="1.4" cy="5.2" r="1.3" fill="#16937C"/><circle cx="1.4" cy="8.9" r="1.3" fill="#16937C"/></svg>
<div class="t sm" style="left:872.00px;top:405.24px;font-size:10.0px;color:#3a3f45;font-weight:400;">Updated By</div>
<svg class="r" style="left:926.50px;top:404.60px;" width="9" height="9" viewBox="0 0 9 9"><circle cx="4.3" cy="4.3" r="3.7" fill="none" stroke="#777" stroke-width="0.8"/><path d="M4.3 3.6 V6.3" stroke="#777" stroke-width="0.9"/><circle cx="4.3" cy="2.4" r="0.55" fill="#777"/></svg>
<svg class="r" style="left:1024.90px;top:405.50px;" width="3" height="11" viewBox="0 0 3 11"><circle cx="1.4" cy="1.5" r="1.3" fill="#16937C"/><circle cx="1.4" cy="5.2" r="1.3" fill="#16937C"/><circle cx="1.4" cy="8.9" r="1.3" fill="#16937C"/></svg>
<div class="t sm" style="left:1040.50px;top:405.24px;font-size:10.0px;color:#3a3f45;font-weight:400;">Event Logged Computer</div>
<svg class="r" style="left:1150.50px;top:404.60px;" width="9" height="9" viewBox="0 0 9 9"><circle cx="4.3" cy="4.3" r="3.7" fill="none" stroke="#777" stroke-width="0.8"/><path d="M4.3 3.6 V6.3" stroke="#777" stroke-width="0.9"/><circle cx="4.3" cy="2.4" r="0.55" fill="#777"/></svg>
<svg class="r" style="left:491.50px;top:405.80px;" width="10" height="10" viewBox="0 0 10 10"><circle cx="5" cy="5" r="3.3" fill="none" stroke="#3F7CD8" stroke-width="2.2" stroke-dasharray="1.5 1.1"/><circle cx="5" cy="5" r="2.6" fill="none" stroke="#3F7CD8" stroke-width="1.5"/></svg>
<svg class="r" style="left:765.80px;top:406.50px;" width="6" height="5" viewBox="0 0 6 5"><path d="M0.6 4 L3 1.2 L5.4 4" fill="none" stroke="#16937C" stroke-width="1.1"/></svg>
<div class="r" style="left:23.10px;top:508.00px;width:1237.90px;height:26.30px;background:#EBF7FD"></div>
<div class="r" style="left:342.80px;top:508.00px;width:179.40px;height:26.30px;background:#DFF1FA"></div>
<svg class="r" style="left:503.50px;top:518.50px;" width="9" height="6" viewBox="0 0 9 6"><path d="M0.5 1 H8.5 M0.5 3 H8.5 M0.5 5 H8.5" stroke="#D6DEE3" stroke-width="0.8"/></svg>
<div class="r" style="left:23.10px;top:454.90px;width:1237.90px;height:1.00px;background:#EEEEEE"></div>
<div class="r" style="left:23.10px;top:481.20px;width:1237.90px;height:1.00px;background:#EEEEEE"></div>
<div class="r" style="left:23.10px;top:507.50px;width:1237.90px;height:1.00px;background:#EEEEEE"></div>
<div class="r" style="left:23.10px;top:533.80px;width:1237.90px;height:1.00px;background:#EEEEEE"></div>
<div class="r" style="left:23.10px;top:560.10px;width:1237.90px;height:1.00px;background:#EEEEEE"></div>
<div class="r" style="left:23.10px;top:586.40px;width:1237.90px;height:1.00px;background:#EEEEEE"></div>
<div class="r" style="left:23.10px;top:612.70px;width:1237.90px;height:1.00px;background:#EEEEEE"></div>
<div class="r" style="left:23.10px;top:639.00px;width:1237.90px;height:1.00px;background:#EEEEEE"></div>
<div class="r" style="left:23.10px;top:665.30px;width:1237.90px;height:1.00px;background:#EEEEEE"></div>
<div class="r" style="left:23.10px;top:691.60px;width:1237.90px;height:1.00px;background:#EEEEEE"></div>
<div class="r" style="left:188.10px;top:393.90px;width:1.00px;height:319.10px;background:#E4E8EA"></div>
<div class="r" style="left:0;top:429.1px;width:1280px;height:276.9px;overflow:hidden">
<div class="t sl" style="left:30.50px;top:8.15px;font-size:10.1px;color:#333;font-weight:400;">7/16/2025 1:42:17 PM</div>
<div class="t sl" style="left:195.40px;top:8.15px;font-size:10.1px;color:#333;font-weight:400;">Announcement</div>
<div class="t sl" style="left:350.70px;top:8.15px;font-size:10.1px;color:#333;font-weight:400;">demo.admindroid.local/Sales</div>
<div class="t sl" style="left:530.20px;top:8.15px;font-size:10.1px;color:#333;font-weight:400;">SAM-Account-Name</div>
<div class="t sl" style="left:681.50px;top:8.15px;font-size:10.1px;color:#333;font-weight:400;">Announcement</div>
<div class="t sl" style="left:872.00px;top:8.15px;font-size:10.1px;color:#333;font-weight:400;">isaac.owens</div>
<div class="t sl" style="left:1040.50px;top:8.11px;font-size:10.15px;color:#333;font-weight:400;">admindroid-demo.demo.admindroid.local</div>
<div class="t sl" style="left:30.50px;top:34.45px;font-size:10.1px;color:#333;font-weight:400;">7/1/2025 12:42:26 PM</div>
<div class="t sl" style="left:195.40px;top:34.45px;font-size:10.1px;color:#333;font-weight:400;">AdminDroidAuditor</div>
<div class="t sl" style="left:350.70px;top:34.45px;font-size:10.1px;color:#333;font-weight:400;">demo.admindroid.local</div>
<div class="t sl" style="left:530.20px;top:34.45px;font-size:10.1px;color:#333;font-weight:400;">Member</div>
<div class="t sl" style="left:681.50px;top:34.45px;font-size:10.1px;color:#333;font-weight:400;letter-spacing:-0.21px">CN=admindroid-demo,OU=Domai…</div>
<div class="t sl" style="left:872.00px;top:34.45px;font-size:10.1px;color:#333;font-weight:400;">droid-admin-demo-bot</div>
<div class="t sl" style="left:1040.50px;top:34.41px;font-size:10.15px;color:#333;font-weight:400;">admindroid-demo.demo.admindroid.local</div>
<div class="t sl" style="left:30.50px;top:60.75px;font-size:10.1px;color:#333;font-weight:400;">7/1/2025 6:30:15 PM</div>
<div class="t sl" style="left:195.40px;top:60.75px;font-size:10.1px;color:#333;font-weight:400;">AdminDroidAuditor</div>
<div class="t sl" style="left:350.70px;top:60.75px;font-size:10.1px;color:#333;font-weight:400;">demo.admindroid.local</div>
<div class="t sl" style="left:530.20px;top:60.75px;font-size:10.1px;color:#333;font-weight:400;">Member</div>
<div class="t sl" style="left:681.50px;top:60.75px;font-size:10.1px;color:#333;font-weight:400;letter-spacing:-0.21px">CN=admindroid-demo,OU=Domai…</div>
<div class="t sl" style="left:872.00px;top:60.75px;font-size:10.1px;color:#333;font-weight:400;">droid-admin-demo-bot</div>
<div class="t sl" style="left:1040.50px;top:60.71px;font-size:10.15px;color:#333;font-weight:400;">admindroid-demo.demo.admindroid.local</div>
<div class="t sl" style="left:30.50px;top:87.05px;font-size:10.1px;color:#333;font-weight:400;">7/1/2025 1:00:10 PM</div>
<div class="t sl" style="left:195.40px;top:87.05px;font-size:10.1px;color:#333;font-weight:400;">AdminDroidAuditor</div>
<div class="t sl" style="left:350.70px;top:87.05px;font-size:10.1px;color:#333;font-weight:400;">demo.admindroid.local</div>
<div class="t sl" style="left:530.20px;top:87.05px;font-size:10.1px;color:#333;font-weight:400;">Member</div>
<div class="t sl" style="left:681.50px;top:87.05px;font-size:10.1px;color:#333;font-weight:400;letter-spacing:-0.21px">CN=admindroid-demo,OU=Domai…</div>
<div class="t sl" style="left:872.00px;top:87.05px;font-size:10.1px;color:#333;font-weight:400;">droid-admin-demo-bot</div>
<div class="t sl" style="left:1040.50px;top:87.01px;font-size:10.15px;color:#333;font-weight:400;">admindroid-demo.demo.admindroid.local</div>
<div class="t sl" style="left:30.50px;top:113.35px;font-size:10.1px;color:#333;font-weight:400;">7/1/2025 1:30:08 PM</div>
<div class="t sl" style="left:195.40px;top:113.35px;font-size:10.1px;color:#333;font-weight:400;">AdminDroidAuditor</div>
<div class="t sl" style="left:350.70px;top:113.35px;font-size:10.1px;color:#333;font-weight:400;">demo.admindroid.local</div>
<div class="t sl" style="left:530.20px;top:113.35px;font-size:10.1px;color:#333;font-weight:400;">Member</div>
<div class="t sl" style="left:681.50px;top:113.35px;font-size:10.1px;color:#333;font-weight:400;letter-spacing:-0.21px">CN=admindroid-demo,OU=Domai…</div>
<div class="t sl" style="left:872.00px;top:113.35px;font-size:10.1px;color:#333;font-weight:400;">droid-admin-demo-bot</div>
<div class="t sl" style="left:1040.50px;top:113.31px;font-size:10.15px;color:#333;font-weight:400;">admindroid-demo.demo.admindroid.local</div>
<div class="t sl" style="left:30.50px;top:139.65px;font-size:10.1px;color:#333;font-weight:400;">7/1/2025 2:00:08 PM</div>
<div class="t sl" style="left:195.40px;top:139.65px;font-size:10.1px;color:#333;font-weight:400;">AdminDroidAuditor</div>
<div class="t sl" style="left:350.70px;top:139.65px;font-size:10.1px;color:#333;font-weight:400;">demo.admindroid.local</div>
<div class="t sl" style="left:530.20px;top:139.65px;font-size:10.1px;color:#333;font-weight:400;">Member</div>
<div class="t sl" style="left:681.50px;top:139.65px;font-size:10.1px;color:#333;font-weight:400;letter-spacing:-0.21px">CN=admindroid-demo,OU=Domai…</div>
<div class="t sl" style="left:872.00px;top:139.65px;font-size:10.1px;color:#333;font-weight:400;">droid-admin-demo-bot</div>
<div class="t sl" style="left:1040.50px;top:139.61px;font-size:10.15px;color:#333;font-weight:400;">admindroid-demo.demo.admindroid.local</div>
<div class="t sl" style="left:30.50px;top:165.95px;font-size:10.1px;color:#333;font-weight:400;">7/1/2025 2:30:05 PM</div>
<div class="t sl" style="left:195.40px;top:165.95px;font-size:10.1px;color:#333;font-weight:400;">AdminDroidAuditor</div>
<div class="t sl" style="left:350.70px;top:165.95px;font-size:10.1px;color:#333;font-weight:400;">demo.admindroid.local</div>
<div class="t sl" style="left:530.20px;top:165.95px;font-size:10.1px;color:#333;font-weight:400;">Member</div>
<div class="t sl" style="left:681.50px;top:165.95px;font-size:10.1px;color:#333;font-weight:400;letter-spacing:-0.21px">CN=admindroid-demo,OU=Domai…</div>
<div class="t sl" style="left:872.00px;top:165.95px;font-size:10.1px;color:#333;font-weight:400;">droid-admin-demo-bot</div>
<div class="t sl" style="left:1040.50px;top:165.91px;font-size:10.15px;color:#333;font-weight:400;">admindroid-demo.demo.admindroid.local</div>
<div class="t sl" style="left:30.50px;top:192.25px;font-size:10.1px;color:#333;font-weight:400;">7/1/2025 3:00:10 PM</div>
<div class="t sl" style="left:195.40px;top:192.25px;font-size:10.1px;color:#333;font-weight:400;">AdminDroidAuditor</div>
<div class="t sl" style="left:350.70px;top:192.25px;font-size:10.1px;color:#333;font-weight:400;">demo.admindroid.local</div>
<div class="t sl" style="left:530.20px;top:192.25px;font-size:10.1px;color:#333;font-weight:400;">Member</div>
<div class="t sl" style="left:681.50px;top:192.25px;font-size:10.1px;color:#333;font-weight:400;letter-spacing:-0.21px">CN=admindroid-demo,OU=Domai…</div>
<div class="t sl" style="left:872.00px;top:192.25px;font-size:10.1px;color:#333;font-weight:400;">droid-admin-demo-bot</div>
<div class="t sl" style="left:1040.50px;top:192.21px;font-size:10.15px;color:#333;font-weight:400;">admindroid-demo.demo.admindroid.local</div>
<div class="t sl" style="left:30.50px;top:218.55px;font-size:10.1px;color:#333;font-weight:400;">7/1/2025 3:30:08 PM</div>
<div class="t sl" style="left:195.40px;top:218.55px;font-size:10.1px;color:#333;font-weight:400;">AdminDroidAuditor</div>
<div class="t sl" style="left:350.70px;top:218.55px;font-size:10.1px;color:#333;font-weight:400;">demo.admindroid.local</div>
<div class="t sl" style="left:530.20px;top:218.55px;font-size:10.1px;color:#333;font-weight:400;">Member</div>
<div class="t sl" style="left:681.50px;top:218.55px;font-size:10.1px;color:#333;font-weight:400;letter-spacing:-0.21px">CN=admindroid-demo,OU=Domai…</div>
<div class="t sl" style="left:872.00px;top:218.55px;font-size:10.1px;color:#333;font-weight:400;">droid-admin-demo-bot</div>
<div class="t sl" style="left:1040.50px;top:218.51px;font-size:10.15px;color:#333;font-weight:400;">admindroid-demo.demo.admindroid.local</div>
<div class="t sl" style="left:30.50px;top:244.85px;font-size:10.1px;color:#333;font-weight:400;">7/1/2025 4:00:14 PM</div>
<div class="t sl" style="left:195.40px;top:244.85px;font-size:10.1px;color:#333;font-weight:400;">AdminDroidAuditor</div>
<div class="t sl" style="left:350.70px;top:244.85px;font-size:10.1px;color:#333;font-weight:400;">demo.admindroid.local</div>
<div class="t sl" style="left:530.20px;top:244.85px;font-size:10.1px;color:#333;font-weight:400;">Member</div>
<div class="t sl" style="left:681.50px;top:244.85px;font-size:10.1px;color:#333;font-weight:400;letter-spacing:-0.21px">CN=admindroid-demo,OU=Domai…</div>
<div class="t sl" style="left:872.00px;top:244.85px;font-size:10.1px;color:#333;font-weight:400;">droid-admin-demo-bot</div>
<div class="t sl" style="left:1040.50px;top:244.81px;font-size:10.15px;color:#333;font-weight:400;">admindroid-demo.demo.admindroid.local</div>
<div class="t sl" style="left:30.50px;top:271.15px;font-size:10.1px;color:#333;font-weight:400;">7/1/2025 4:30:55 PM</div>
<div class="t sl" style="left:195.40px;top:271.15px;font-size:10.1px;color:#333;font-weight:400;">AdminDroidAuditor</div>
<div class="t sl" style="left:350.70px;top:271.15px;font-size:10.1px;color:#333;font-weight:400;">demo.admindroid.local</div>
<div class="t sl" style="left:530.20px;top:271.15px;font-size:10.1px;color:#333;font-weight:400;">Member</div>
<div class="t sl" style="left:681.50px;top:271.15px;font-size:10.1px;color:#333;font-weight:400;letter-spacing:-0.21px">CN=admindroid-demo,OU=Domai…</div>
<div class="t sl" style="left:872.00px;top:271.15px;font-size:10.1px;color:#333;font-weight:400;">droid-admin-demo-bot</div>
<div class="t sl" style="left:1040.50px;top:271.11px;font-size:10.15px;color:#333;font-weight:400;">admindroid-demo.demo.admindroid.local</div>
</div>
<div class="r" style="left:23.10px;top:706.00px;width:1237.90px;height:7.00px;background:#D6D6D6"></div>
<div class="r" style="left:23.10px;top:706.00px;width:1118.90px;height:7.00px;background:#808080"></div>
<div class="r" style="left:23.10px;top:713.00px;width:1237.90px;height:6.00px;background:#E6F3FA"></div>
<div class="r" style="left:1236.20px;top:396.20px;width:39.10px;height:31.40px;background:#fff;border-radius:16px 0 0 16px;box-shadow:0.5px 1px 1.5px rgba(0,0,0,0.14)"></div>
<div class="r" style="left:1272.00px;top:397.00px;width:3.30px;height:30.60px;background:linear-gradient(90deg,#fff,#ECECEC)"></div>
<svg class="r" style="left:1247.00px;top:403.00px;" width="22" height="20" viewBox="0 0 22 20"><path d="M9.5 15.1 H0.8 V0.7 H18.9 V9.2 M0.8 3.7 H18.9 M6.9 3.7 V15.1 M12.5 3.7 V6.3" fill="none" stroke="#666" stroke-width="1.3"/><circle cx="15" cy="14.1" r="2.9" fill="none" stroke="#666" stroke-width="1.9" stroke-dasharray="1.5 0.8"/><circle cx="15" cy="14.1" r="1.7" fill="#fff" stroke="#666" stroke-width="1"/></svg>
</body></html>
